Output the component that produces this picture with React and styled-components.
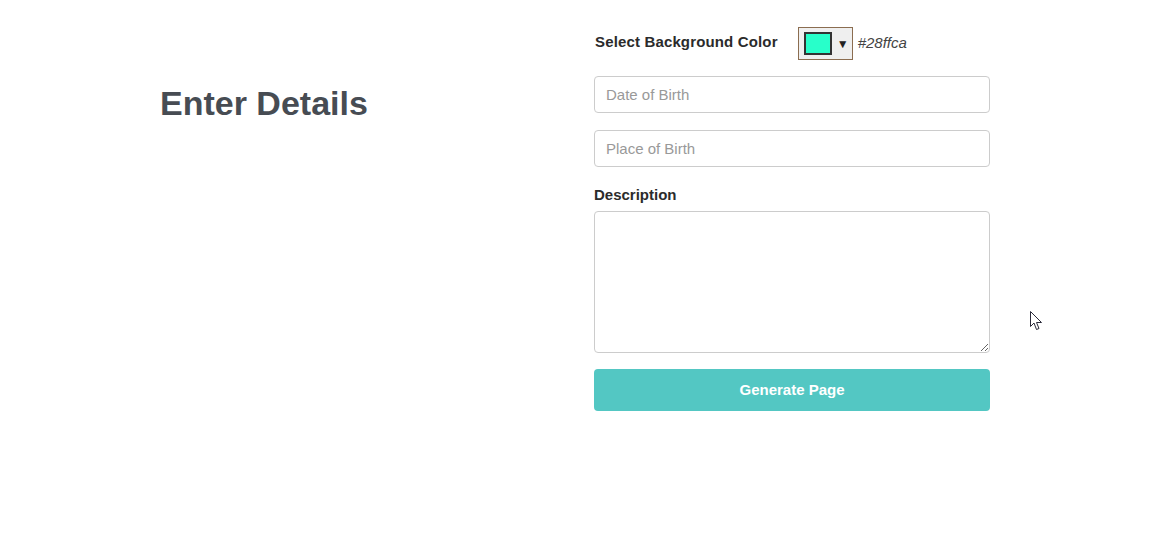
import styled, { createGlobalStyle } from "styled-components";
import { useState } from "react";

const GlobalStyle = createGlobalStyle`
  html, body {
    margin: 0;
    padding: 0;
    background: #fff;
    font-family: "Liberation Sans", Arial, sans-serif;
  }
`;

const Page = styled.div`
  position: relative;
  width: 1152px;
  height: 534px;
  overflow: hidden;
`;

const Container = styled.div`
  width: 832px;
  margin: 0 auto;
  padding-top: 27px;
  display: flex;
`;

const LeftCol = styled.div`
  width: 434px;
  padding-top: 57px;
`;

const Heading = styled.h1`
  margin: 0;
  font-size: 34px;
  line-height: 38px;
  font-weight: 700;
  color: #474c53;
`;

const Form = styled.form`
  width: 396px;
  display: flex;
  flex-direction: column;
`;

const ColorRow = styled.div`
  display: flex;
  align-items: center;
  height: 33px;
  margin-bottom: 16px;
`;

const Label = styled.label`
  font-size: 15px;
  font-weight: 700;
  color: #2b2b2b;
  line-height: 17px;
  letter-spacing: ${(p) => p.$ls || 0}px;
  padding-left: ${(p) => p.$indent || 0}px;
  margin-bottom: ${(p) => p.$mb || 0}px;
  position: relative;
  top: ${(p) => p.$lift || 0}px;
`;

const Picker = styled.button`
  margin-left: 20px;
  width: 55px;
  height: 33px;
  box-sizing: border-box;
  border: 1px solid #8b6d50;
  background: #efefef;
  display: flex;
  align-items: center;
  padding: 0 0 0 5px;
  cursor: pointer;
`;

const Swatch = styled.span`
  width: 28px;
  height: 23px;
  box-sizing: border-box;
  border: 2px solid #333;
  background: ${(p) => p.$color};
`;

const Arrow = styled.span`
  margin-left: 5px;
  font-size: 12px;
  line-height: 12px;
  color: #222;
`;

const HexText = styled.span`
  margin-left: 5px;
  font-size: 15px;
  font-style: italic;
  color: #444;
  position: relative;
  top: -1px;
`;

const Input = styled.input`
  height: 37px;
  box-sizing: border-box;
  border: 1px solid #ccc;
  border-radius: 4px;
  padding: 0 11px;
  font-family: inherit;
  font-size: 15px;
  color: #333;
  margin-bottom: ${(p) => p.$mb || 0}px;
  &::placeholder {
    color: #999;
  }
`;

const TextArea = styled.textarea`
  height: 142px;
  box-sizing: border-box;
  border: 1px solid #ccc;
  border-radius: 4px;
  padding: 8px 11px;
  font-family: inherit;
  font-size: 15px;
  margin: 0 0 16px;
`;

const Button = styled.button`
  height: 42px;
  border: none;
  border-radius: 4px;
  background: #53c7c3;
  color: #fff;
  font-family: inherit;
  font-size: 15px;
  font-weight: 700;
  padding: 0 0 2px;
  cursor: pointer;
`;

const Cursor = styled.svg`
  position: absolute;
  left: 1030px;
  top: 311px;
`;

export default function App() {
  const [color] = useState("#28ffca");

  return (
    <>
      <GlobalStyle />
      <Page>
        <Container>
          <LeftCol>
            <Heading>Enter Details</Heading>
          </LeftCol>

          <Form onSubmit={(e) => e.preventDefault()}>
            <ColorRow>
              <Label $indent={1} $ls={0.15} $lift={-2}>
                Select Background Color
              </Label>
              <Picker type="button">
                <Swatch $color={color} />
                <Arrow>▼</Arrow>
              </Picker>
              <HexText>{color}</HexText>
            </ColorRow>

            <Input placeholder="Date of Birth" $mb={17} />
            <Input placeholder="Place of Birth" $mb={19} />

            <Label $mb={8}>Description</Label>
            <TextArea />

            <Button type="submit">Generate Page</Button>
          </Form>
        </Container>

        {/* mouse pointer from the screenshot */}
        <Cursor width="14" height="21" viewBox="0 0 14 21">
          <path
            d="M0.5 0.5 L0.5 15.5 L4 12 L6.5 18.5 L9 17.5 L6.5 11.5 L11.5 11.5 Z"
            fill="#fff"
            stroke="#2a2a3a"
            strokeWidth="1"
          />
        </Cursor>
      </Page>
    </>
  );
}
